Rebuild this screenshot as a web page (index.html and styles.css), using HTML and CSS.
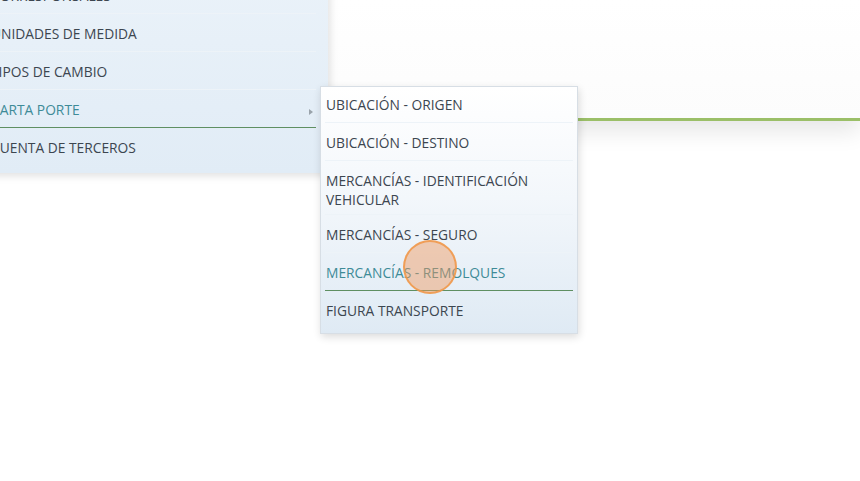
FILE: index.html
```html
<!DOCTYPE html>
<html lang="es">
<head>
    <meta charset="UTF-8">
    <title>Menú Catálogos</title>
    <link rel="stylesheet" href="styles.css">
</head>
<body>

    <!-- Barra superior -->
    <header class="topbar"></header>

    <!-- Menú desplegable -->
    <div class="menus">
        <ul class="menu main-menu">
            <li>CORRESPONSALES</li>
            <li>UNIDADES DE MEDIDA</li>
            <li>TIPOS DE CAMBIO</li>
            <li class="active has-sub">CARTA PORTE <span class="arrow"></span></li>
            <li>CUENTA DE TERCEROS</li>
        </ul>

        <ul class="menu sub-menu">
            <li>UBICACIÓN - ORIGEN</li>
            <li>UBICACIÓN - DESTINO</li>
            <li class="two-lines">MERCANCÍAS - IDENTIFICACIÓN<br>VEHICULAR</li>
            <li>MERCANCÍAS - SEGURO</li>
            <li class="active">MERCANCÍAS - REMOLQUES</li>
            <li>FIGURA TRANSPORTE</li>
        </ul>
    </div>

    <!-- Cursor -->
    <div class="cursor"></div>

</body>
</html>
```

FILE: styles.css
```css
body {
    font-family: 'Open Sans', 'Liberation Sans', sans-serif;
    background-color: #ffffff;
    color: #3c4650;
    margin: 0;
    padding: 0;
    height: 481px;
    overflow: hidden;
    position: relative;
}

/* Barra superior */
.topbar {
    height: 118px;
    background: linear-gradient(to bottom, #ffffff, #fcfcfc);
    border-bottom: 3px solid #9bbf68;
    box-shadow: 0 10px 22px rgba(0, 0, 0, 0.1);
}

/* Menús */
.menus {
    position: absolute;
    top: -24px;
    left: -15px;
    display: flex;
    align-items: flex-start;
}

.menu {
    list-style: none;
    margin: 0;
    font-size: 13.8px;
    line-height: 19px;
}

.menu li {
    padding: 10px 6px 8px 6px;
    border-bottom: 1px solid #edf3f8;
    white-space: nowrap;
    position: relative;
}

.menu li:last-child {
    border-bottom: 1px solid transparent;
}

.menu li.active {
    color: #3e8b97;
    border-bottom: 1px solid #5f8f62;
}

.main-menu {
    width: 325px;
    padding: 0 12px 7px 6px;
    background: linear-gradient(to bottom, #eaf2f9, #e1ecf6);
    box-shadow: 2px 3px 8px rgba(0, 0, 0, 0.12);
}

.main-menu li {
    padding-left: 0;
}

.arrow {
    position: absolute;
    right: 3px;
    top: 19px;
    width: 0;
    height: 0;
    border-top: 3px solid transparent;
    border-bottom: 3px solid transparent;
    border-left: 4px solid #9aa3ab;
}

.sub-menu {
    width: 248px;
    margin-top: 110px;
    margin-left: -8px;
    padding: 0 4px 4px 4px;
    background: linear-gradient(to bottom, #ffffff, #f3f7fb 45%, #dfeaf4);
    border: 1px solid #d7dee5;
    box-shadow: 1px 3px 8px rgba(0, 0, 0, 0.14);
}

.sub-menu li {
    padding-left: 1px;
}

.sub-menu li:first-child {
    padding-top: 8px;
}

.sub-menu li.two-lines {
    padding-bottom: 5px;
}

/* Cursor */
.cursor {
    position: absolute;
    left: 403px;
    top: 240px;
    width: 50px;
    height: 50px;
    border-radius: 50%;
    background-color: rgba(240, 150, 90, 0.45);
    border: 2px solid rgba(240, 150, 70, 0.85);
}
```
